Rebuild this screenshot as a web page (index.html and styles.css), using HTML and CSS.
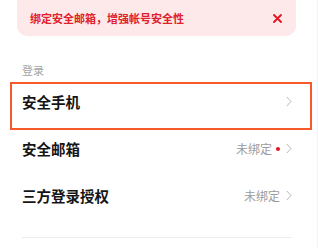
FILE: index.html
```html
<!DOCTYPE html>
<html lang="zh-CN">
<head>
<meta charset="utf-8">
<link rel="stylesheet" href="styles.css">
</head>
<body>
<div class="page">
  <div class="banner">
    <span class="banner-text">绑定安全邮箱，增强帐号安全性</span>
    <svg class="close" width="9" height="9" viewBox="0 0 9 9"><path d="M1 1L8 8M8 1L1 8" stroke="#e3141e" stroke-width="1.8" stroke-linecap="round"/></svg>
  </div>
  <div class="label">登录</div>
  <div class="list">
    <div class="row">
      <span class="title">安全手机</span>
      <span class="right">
        <svg class="chev" width="6" height="11" viewBox="0 0 6 11"><polyline points="0.8,1 5,5.5 0.8,10" fill="none" stroke="#b8b8b8" stroke-width="1"/></svg>
      </span>
    </div>
    <div class="row">
      <span class="title">安全邮箱</span>
      <span class="right">
        <span class="status">未绑定</span>
        <span class="dot"></span>
        <svg class="chev" width="6" height="11" viewBox="0 0 6 11"><polyline points="0.8,1 5,5.5 0.8,10" fill="none" stroke="#b8b8b8" stroke-width="1"/></svg>
      </span>
    </div>
    <div class="row">
      <span class="title">三方登录授权</span>
      <span class="right">
        <span class="status">未绑定</span>
        <svg class="chev" width="6" height="11" viewBox="0 0 6 11"><polyline points="0.8,1 5,5.5 0.8,10" fill="none" stroke="#b8b8b8" stroke-width="1"/></svg>
      </span>
    </div>
  </div>
  <div class="divider"></div>
  <div class="highlight"></div>
</div>
</body>
</html>
```
FILE: styles.css
```css
html, body {
  margin: 0;
  padding: 0;
  background: #ffffff;
}
body {
  font-family: "Noto Sans CJK SC", "Noto Sans", sans-serif;
  overflow: hidden;
}
.page {
  position: relative;
  width: 318px;
  height: 248px;
  overflow: hidden;
  box-sizing: border-box;
  border-right: 1px solid #f4f4f4;
}
.banner {
  margin: -10px 21px 0 17px;
  height: 46px;
  padding: 10px 14px 0 13px;
  box-sizing: border-box;
  background: #fde9ea;
  border-radius: 10px;
  display: flex;
  align-items: center;
  justify-content: space-between;
}
.banner-text {
  color: #e0202a;
  font-size: 11px;
  font-weight: 700;
  line-height: 16px;
}
.close {
  display: block;
}
.label {
  margin: 26px 0 0 22px;
  font-size: 11px;
  line-height: 16px;
  color: #a3a3a3;
}
.list {
  display: flex;
  flex-direction: column;
}
.row {
  height: 47px;
  display: flex;
  align-items: center;
  justify-content: space-between;
  padding: 0 25px 0 22px;
}
.title {
  font-size: 14.5px;
  font-weight: 700;
  color: #151515;
  line-height: 20px;
}
.right {
  display: flex;
  align-items: center;
}
.status {
  font-size: 12px;
  color: #9b9b9b;
  line-height: 16px;
  margin-right: 6px;
}
.dot {
  width: 4px;
  height: 4px;
  border-radius: 50%;
  background: #e3141e;
  margin: 0 6px 0 -2px;
}
.chev {
  display: block;
}
.divider {
  margin: 18px 25px 0 22px;
  height: 1px;
  background: #ededed;
}
.highlight {
  position: absolute;
  left: 10px;
  top: 82px;
  width: 302px;
  height: 48px;
  box-sizing: border-box;
  border: 2px solid #f65a2b;
}
```
